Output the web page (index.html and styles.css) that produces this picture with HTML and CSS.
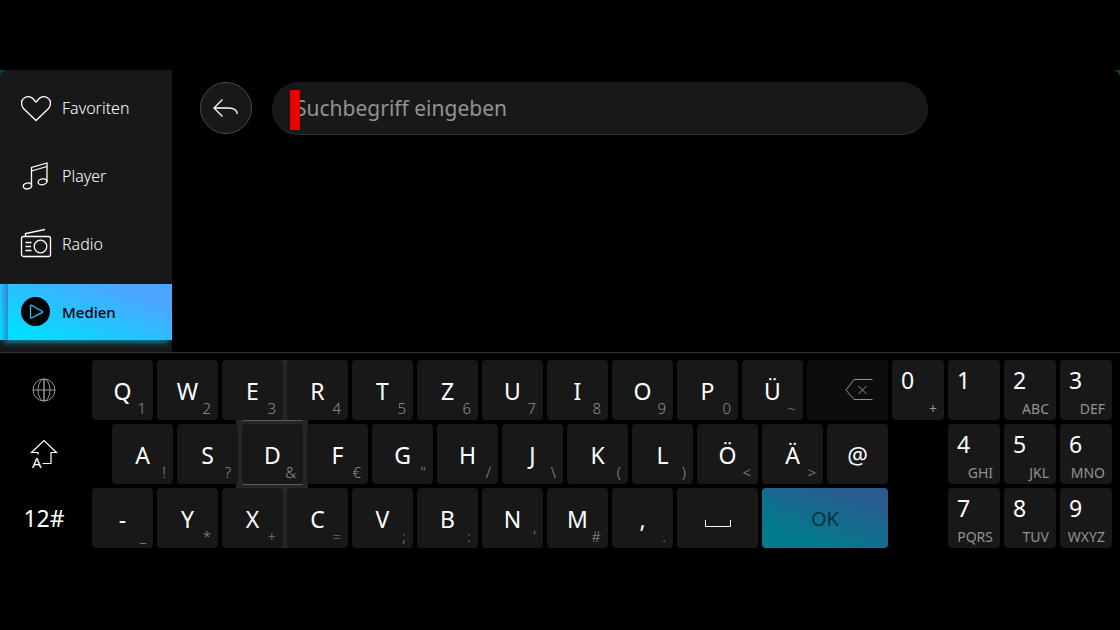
FILE: index.html
```html
<!DOCTYPE html>
<html lang="de">
<head>
<meta charset="utf-8">
<meta name="viewport" content="width=device-width, initial-scale=1">
<title>Medien – Suche</title>
<link rel="stylesheet" href="styles.css">
</head>
<body>
<div class="stage">
  <nav class="sidebar" aria-label="Quellen">
    <button class="source" type="button">
      <svg class="source-icon" viewBox="0 0 32 32" aria-hidden="true"><path d="M16 28.500L3.500 16.500C0.500 13 1 8 4.500 5.800C8.500 3.500 12 5 14.500 8.500L16 10L17.500 8.500C20 5 23.500 3.500 27.500 5.800C31 8 31.500 13 28.500 16.500Z"/></svg>
      <span>Favoriten</span>
    </button>
    <button class="source" type="button">
      <svg class="source-icon" viewBox="0 0 32 32" aria-hidden="true"><path d="M11.500 26V7.500L27 3V22M11.500 11L27 6.500"/><ellipse cx="7.500" cy="26" rx="4.200" ry="2.900" transform="rotate(-12 7.500 26)"/><ellipse cx="22.500" cy="21.800" rx="4.500" ry="2.900" transform="rotate(-12 22.500 21.800)"/></svg>
      <span>Player</span>
    </button>
    <button class="source" type="button">
      <svg class="source-icon" viewBox="0 0 32 32" aria-hidden="true"><rect x="1.500" y="8.500" width="29" height="20" rx="2"/><path d="M5.500 8.500V5.500L25 1.500M5.500 14.500H11.500M5.500 18.500H11M5.500 22.500H11.500"/><circle cx="20.500" cy="18.500" r="6.300"/></svg>
      <span>Radio</span>
    </button>
    <button class="source active" type="button" aria-current="page">
      <svg class="source-icon" viewBox="0 0 32 32" aria-hidden="true"><circle class="disc" cx="15.500" cy="15.500" r="14.500"/><path class="play" d="M10.500 10.200V21.500Q10.500 22.600 11.600 22L22 16.700Q23 16 22 15.300L11.600 9.300Q10.500 8.800 10.500 10.200Z"/></svg>
      <span>Medien</span>
    </button>
  </nav>
  <main class="content">
    <form class="search" role="search">
      <button class="back" type="button" aria-label="Zurück">
        <svg viewBox="0 0 26 20" aria-hidden="true"><path d="M9.500 1.500L1 10L9.500 18.500M1 10H15C21 10 24 12 24.300 16"/></svg>
      </button>
      <div class="field">
        <input class="field-input" type="text" aria-label="Suchbegriff" placeholder="Suchbegriff eingeben">
        <span class="cursor"></span>
      </div>
    </form>
  </main>
</div>
<section class="keyboard" aria-label="Tastatur">
  <div class="modes">
    <button class="mode" type="button" aria-label="Sprache"><svg class="globe" viewBox="0 0 24 24" aria-hidden="true"><circle cx="12" cy="12" r="11"/><ellipse cx="12" cy="12" rx="6" ry="11"/><path d="M12 1V23M1 12H23M12 1V23"/></svg></button>
    <button class="mode" type="button" aria-label="Umschalten"><svg class="shift" viewBox="0 0 36 40" aria-hidden="true"><path d="M12 19V18.500V18.500H5.500L18 6.500L30.500 18.500H25V29.500H16.500M12 18.500V20.500"/><text x="6" y="34">A</text></svg></button>
    <button class="mode" type="button">12#</button>
  </div>
  <div class="letters">
    <div class="row">
      <button class="key" type="button"><span>Q</span><small>1</small></button>
      <button class="key" type="button"><span>W</span><small>2</small></button>
      <button class="key joined" type="button"><span>E</span><small>3</small></button>
      <button class="key" type="button"><span>R</span><small>4</small></button>
      <button class="key" type="button"><span>T</span><small>5</small></button>
      <button class="key" type="button"><span>Z</span><small>6</small></button>
      <button class="key" type="button"><span>U</span><small>7</small></button>
      <button class="key" type="button"><span>I</span><small>8</small></button>
      <button class="key" type="button"><span>O</span><small>9</small></button>
      <button class="key" type="button"><span>P</span><small>0</small></button>
      <button class="key" type="button"><span>Ü</span><small>~</small></button>
      <button class="key wide erase" type="button" aria-label="Löschen"><svg viewBox="0 0 28 22" aria-hidden="true"><path d="M27.500 0.500H9L1 11L9 20.500H27.500M13.500 7L21.500 15M21.500 7L13.500 15"/></svg></button>
    </div>
    <div class="row indented">
      <button class="key" type="button"><span>A</span><small>!</small></button>
      <button class="key" type="button"><span>S</span><small>?</small></button>
      <button class="key focused" type="button"><span>D</span><small>&amp;</small></button>
      <button class="key" type="button"><span>F</span><small>€</small></button>
      <button class="key" type="button"><span>G</span><small>"</small></button>
      <button class="key" type="button"><span>H</span><small>/</small></button>
      <button class="key" type="button"><span>J</span><small>\</small></button>
      <button class="key" type="button"><span>K</span><small>(</small></button>
      <button class="key" type="button"><span>L</span><small>)</small></button>
      <button class="key" type="button"><span>Ö</span><small>&lt;</small></button>
      <button class="key" type="button"><span>Ä</span><small>&gt;</small></button>
      <button class="key" type="button"><span>@</span></button>
    </div>
    <div class="row">
      <button class="key" type="button"><span>-</span><small>_</small></button>
      <button class="key" type="button"><span>Y</span><small>*</small></button>
      <button class="key joined" type="button"><span>X</span><small>+</small></button>
      <button class="key" type="button"><span>C</span><small>=</small></button>
      <button class="key" type="button"><span>V</span><small>;</small></button>
      <button class="key" type="button"><span>B</span><small>:</small></button>
      <button class="key" type="button"><span>N</span><small>'</small></button>
      <button class="key" type="button"><span>M</span><small>#</small></button>
      <button class="key" type="button"><span>,</span><small>.</small></button>
      <button class="key wide space" type="button" aria-label="Leerzeichen"><svg viewBox="0 0 26 8" aria-hidden="true"><path d="M0.500 0V6.500H25.500V0"/></svg></button>
      <button class="key ok" type="button"><span>OK</span></button>
    </div>
  </div>
  <div class="numpad">
    <button class="key num" type="button"><span>0</span><small>+</small></button>
    <button class="key num" type="button"><span>1</span></button>
    <button class="key num" type="button"><span>2</span><small>ABC</small></button>
    <button class="key num" type="button"><span>3</span><small>DEF</small></button>
    <button class="key num first" type="button"><span>4</span><small>GHI</small></button>
    <button class="key num" type="button"><span>5</span><small>JKL</small></button>
    <button class="key num" type="button"><span>6</span><small>MNO</small></button>
    <button class="key num first" type="button"><span>7</span><small>PQRS</small></button>
    <button class="key num" type="button"><span>8</span><small>TUV</small></button>
    <button class="key num" type="button"><span>9</span><small>WXYZ</small></button>
  </div>
</section>
</body>
</html>
```
FILE: styles.css
```css
* { box-sizing: border-box; }

body {
  margin: 0;
  padding-top: 70px;
  background: #000;
  color: #fff;
  font-family: "Noto Sans", "Open Sans", sans-serif;
}

button, input {
  margin: 0;
  padding: 0;
  border: 0;
  background: none;
  color: inherit;
  font: inherit;
}

svg {
  fill: none;
  stroke: currentColor;
}

/* Upper area */
.stage {
  display: flex;
  background: #073f52;
}

.sidebar {
  display: flex;
  flex: none;
  flex-direction: column;
  gap: 12px;
  width: 172px;
  padding: 10px 0 12px;
  border-top-left-radius: 8px;
  background: #181818;
}

.source {
  display: flex;
  align-items: center;
  gap: 10px;
  height: 56px;
  padding-left: 20px;
  font-size: 16px;
  font-weight: 300;
  text-align: left;
}

.source-icon {
  width: 32px;
  height: 32px;
  stroke-width: 1.3;
}

.source.active {
  background:
    linear-gradient(90deg, rgba(60, 90, 170, 0) 0, rgba(60, 90, 170, 0.6) 8px, transparent 8px),
    linear-gradient(20deg, #00dfff 10%, #4ca6ff 80%);
  box-shadow: 0 7px 5px -4px #087f91;
  color: #000;
  font-size: 15px;
  font-weight: 500;
}

.disc {
  fill: #000;
  stroke: none;
}

.play { stroke: #35bdff; }

.content {
  flex: 1;
  border-top-right-radius: 8px;
  background: #000;
}

.search {
  display: flex;
  gap: 20px;
  padding: 12px 192px 0 28px;
}

.back {
  display: grid;
  flex: none;
  place-items: center;
  width: 52px;
  height: 52px;
  border: 1px solid #484848;
  border-radius: 50%;
  background: #181818;
}

.back svg {
  width: 26px;
  height: 20px;
  stroke-width: 1.3;
}

.field {
  position: relative;
  flex: 1;
}

.field-input {
  width: 100%;
  height: 53px;
  padding: 0 23px;
  border-bottom: 1px solid #303030;
  border-radius: 27px;
  background: #181818;
  font-size: 21px;
}

.field-input::placeholder {
  color: #929292;
  opacity: 1;
}

.cursor {
  position: absolute;
  top: 8px;
  left: 18px;
  width: 10px;
  height: 40px;
  background: #e90000;
}

/* Keyboard */
.keyboard {
  display: flex;
  gap: 4px;
  padding: 7px 8px 0 0;
  border-top: 1px solid #333;
}

.modes, .letters {
  display: flex;
  flex-direction: column;
  gap: 4px;
}

.modes { flex: 0 0 88px; }

.mode {
  display: grid;
  place-items: center;
  height: 60px;
  font-size: 23px;
}

.globe {
  width: 24px;
  height: 24px;
  color: #999;
}

.shift {
  width: 36px;
  height: 40px;
  stroke-width: 1.2;
}

.shift text {
  fill: #fff;
  stroke: none;
  font-size: 15px;
}

.letters {
  flex: 796 1 0;
  isolation: isolate;
}

.row {
  display: flex;
  gap: 4px;
}

.indented { padding-left: 20px; }

.key {
  position: relative;
  display: grid;
  flex: 61 1 0;
  align-items: center;
  justify-items: center;
  min-width: 0;
  height: 60px;
  border-radius: 4px;
  background: #181818;
  font-size: 23px;
  line-height: 32px;
}

.key > * { grid-area: 1 / 1; }

.key span { padding-top: 2px; }

.key small {
  align-self: end;
  justify-self: end;
  padding: 0 7px 2px 0;
  color: #929292;
  font-size: 15px;
  font-weight: 300;
  line-height: 20px;
}

.joined::before, .focused::before, .focused::after {
  content: "";
  position: absolute;
  z-index: -1;
}

.joined::before {
  inset: 0 -8px 0 20px;
  background: #262626;
}

.focused::before {
  inset: -4px -5px -4px -6px;
  background: #262626;
}

.focused::after {
  inset: -4px 1px -1px;
  border: solid #585858;
  border-width: 1px 0;
}

.wide { flex-grow: 81; }

.erase {
  justify-items: end;
  background: #0d0d0d;
  color: #929292;
}

.erase svg {
  width: 28px;
  height: 22px;
  margin-right: 15px;
}

.space svg {
  width: 26px;
  height: 8px;
  margin-top: 12px;
}

.ok {
  flex-grow: 126;
  background: linear-gradient(20deg, #007b8b 20%, #2b5c91 85%);
  color: #06323c;
  font-size: 20px;
}

.numpad {
  display: grid;
  flex: 220 1 0;
  grid-template-columns: repeat(4, 1fr);
  gap: 4px;
}

.first { grid-column-start: 2; }

.num span {
  align-self: start;
  justify-self: start;
  padding: 4px 0 0 9px;
}

.num small {
  padding-bottom: 1px;
  font-size: 14px;
  font-weight: 400;
}
```
